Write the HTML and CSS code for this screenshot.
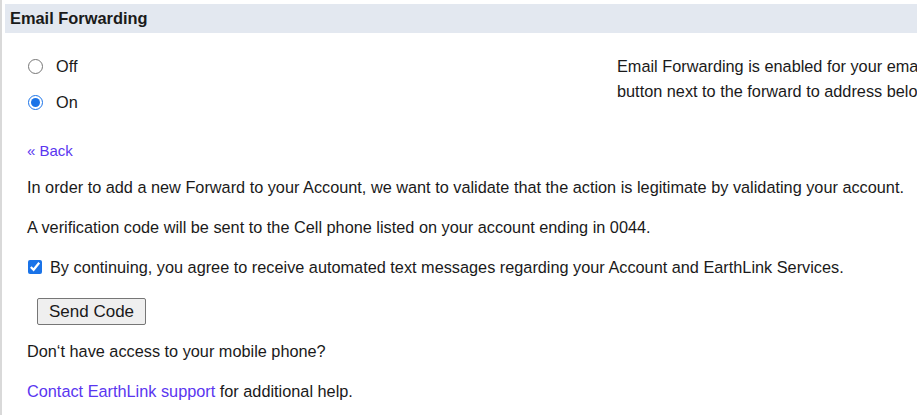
FILE: index.html
```html
<!DOCTYPE html>
<html>
<head>
<meta charset="utf-8">
<link rel="stylesheet" href="styles.css">
</head>
<body>
<div class="frame">
  <div class="panel">
    <div class="header">Email Forwarding</div>
    <div class="top">
      <div class="radios">
        <label class="radio"><input type="radio" name="fw"> <span>Off</span></label>
        <label class="radio"><input type="radio" name="fw" checked> <span>On</span></label>
      </div>
      <div class="info">Email Forwarding is enabled for your email account. Click the delete<br>button next to the forward to address below to remove it.</div>
    </div>
    <div class="body">
      <a class="link back" href="#">« Back</a>
      <p class="para">In order to add a new Forward to your Account, we want to validate that the action is legitimate by validating your account.</p>
      <p class="para">A verification code will be sent to the Cell phone listed on your account ending in 0044.</p>
      <label class="check para"><input type="checkbox" checked> <span>By continuing, you agree to receive automated text messages regarding your Account and EarthLink Services.</span></label>
      <div class="btnrow"><button class="btn">Send Code</button></div>
      <p class="para">Don‘t have access to your mobile phone?</p>
      <p class="para"><a class="link" href="#">Contact EarthLink support</a> for additional help.</p>
    </div>
  </div>
</div>
</body>
</html>
```
FILE: styles.css
```css
html, body {
  margin: 0;
  padding: 0;
  background: #fff;
  overflow: hidden;
}
body {
  font-family: "Liberation Sans", Arial, sans-serif;
  font-size: 16.3px;
  color: #1a1a1a;
}
.frame {
  border-left: 2px solid #d9d9d9;
  padding: 4px 0 0 3px;
  height: 411px;
}
.header {
  background: #e3e8f0;
  font-weight: bold;
  font-size: 16.4px;
  height: 29px;
  line-height: 29px;
  padding-left: 5px;
  white-space: nowrap;
}
.top {
  display: flex;
  padding-top: 22px;
}
.radios {
  width: 612px;
  flex-shrink: 0;
  display: flex;
  flex-direction: column;
  gap: 12px;
  padding-left: 23px;
  box-sizing: border-box;
}
.radio {
  display: flex;
  align-items: center;
  height: 23px;
}
.radio input {
  margin: 0 13px 0 0;
  width: 15px;
  height: 15px;
  accent-color: #1a73e8;
}
.radio + .radio {
  margin-top: 1px;
}
.info {
  white-space: nowrap;
  line-height: 25px;
  margin-top: -1px;
  overflow: hidden;
  min-width: 0;
  flex: 1;
}
.body {
  padding-left: 22px;
  padding-top: 27px;
}
.link {
  color: #5a36f0;
  text-decoration: none;
}
.back {
  font-size: 15px;
  display: block;
  line-height: 20px;
}
.para {
  margin: 20px 0 0 0;
  line-height: 20px;
  display: block;
  white-space: nowrap;
}
.body .back + .para {
  margin-top: 16px;
}
.check {
  display: flex;
  align-items: center;
}
.check input {
  margin: 0 8px 0 1px;
  width: 14px;
  height: 14px;
  accent-color: #1a73e8;
}
.btnrow {
  margin-top: 21px;
  padding-left: 10px;
}
.btn {
  font-family: "Liberation Sans", Arial, sans-serif;
  font-size: 17px;
  color: #1a1a1a;
  background: #efefef;
  border: 1px solid #767676;
  border-radius: 2px;
  height: 27px;
  padding: 0 11px;
  line-height: 22px;
}
.btnrow + .para {
  margin-top: 16px;
}
```
